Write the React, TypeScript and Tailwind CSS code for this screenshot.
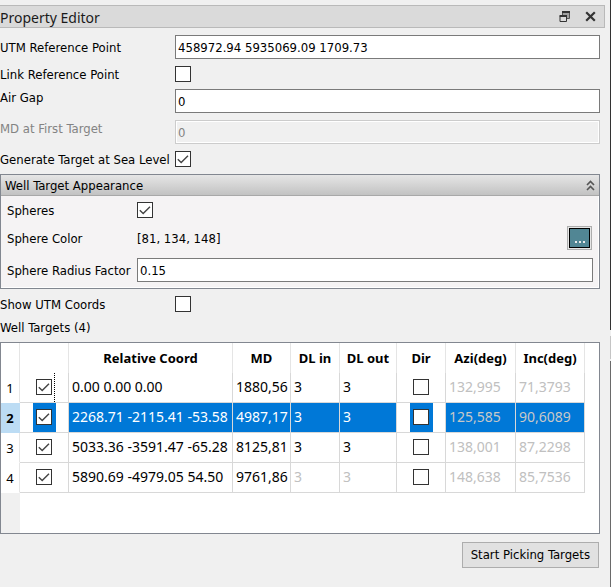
import { useState } from "react";
import type { ReactNode } from "react";

const INPUT =
  "block h-6 w-full min-w-0 border border-[#7a7a7a] bg-white px-[2px] text-[13px] text-black outline-none disabled:border-[#cccccc] disabled:bg-[#f0f0f0] disabled:text-[#838383] disabled:shadow-[inset_0_0_0_1px_#ffffff]";

const LABEL = "-mb-0.5 whitespace-nowrap leading-[18px]";

function CheckBox({ id, label, initial = false }: { id?: string; label?: string; initial?: boolean }) {
  const [checked, setChecked] = useState(initial);
  return (
    <span className="inline-grid size-4 shrink-0">
      <input
        id={id}
        type="checkbox"
        aria-label={label}
        checked={checked}
        onChange={(e) => setChecked(e.target.checked)}
        className="col-start-1 row-start-1 size-4 appearance-none border border-[#333333] bg-white"
      />
      {checked && (
        <svg viewBox="0 0 16 16" className="pointer-events-none col-start-1 row-start-1 size-4" fill="none" stroke="#444444" strokeWidth="1.4">
          <path d="M2.8 8.2 L6.2 11.6 L13 4.8" />
        </svg>
      )}
    </span>
  );
}

function Field({ id, label, disabled, top, children }: { id: string; label: string; disabled?: boolean; top?: boolean; children: ReactNode }) {
  return (
    <div className={`grid grid-cols-[175px_minmax(0,1fr)] ${top ? "items-start" : "items-center"}`}>
      <label htmlFor={id} className={`${LABEL} ${disabled ? "text-[#838383]" : ""}`}>
        {label}
      </label>
      {children}
    </div>
  );
}

type Target = { coord: string; md: string; dlIn: string; dlOut: string; azi: string; inc: string };

const TARGETS: Target[] = [
  { coord: "0.00 0.00 0.00", md: "1880,56", dlIn: "3", dlOut: "3", azi: "132,995", inc: "71,3793" },
  { coord: "2268.71 -2115.41 -53.58", md: "4987,17", dlIn: "3", dlOut: "3", azi: "125,585", inc: "90,6089" },
  { coord: "5033.36 -3591.47 -65.28", md: "8125,81", dlIn: "3", dlOut: "3", azi: "138,001", inc: "87,2298" },
  { coord: "5890.69 -4979.05 54.50", md: "9761,86", dlIn: "3", dlOut: "3", azi: "148,638", inc: "85,7536" },
];

const HEADERS = ["", "Relative Coord", "MD", "DL in", "DL out", "Dir", "Azi(deg)", "Inc(deg)"];

function TargetRow({ target, index, selected }: { target: Target; index: number; selected: boolean }) {
  const last = index === TARGETS.length - 1;
  const cell = "border-r border-b border-[#d8d8d8] bg-clip-padding px-[3px] pb-0.5 overflow-hidden";
  const fill = selected ? "bg-[#0078d7]" : "";
  const main = selected ? "text-white" : "text-black";
  const dim = selected ? "text-[#c8c8c8]" : "text-[#c0c0c0]";
  const dl = last ? dim : main;
  const n = index + 1;
  return (
    <tr className="h-[30px] text-[14px]">
      <th
        scope="row"
        className={`border-r border-b text-center text-[13px] ${selected ? "border-[#bcdcf4] bg-[#bcdcf4] font-bold" : "border-r-[#e5e5e5] border-b-white font-normal"}`}
      >
        {n}
      </th>
      <td className="border-r border-b border-[#d8d8d8] pl-[13px]">
        <div className={`flex h-[29px] items-start pt-[6px] pl-[3px] ${index === 0 ? "w-[22px] border-r border-dotted border-black" : "w-[23px]"} ${fill}`}>
          <CheckBox label={`Use target ${n}`} initial />
        </div>
      </td>
      <td className={`${cell} ${fill} ${main}`}>{target.coord}</td>
      <td className={`${cell} ${fill} ${main}`}>{target.md}</td>
      <td className={`${cell} ${fill} ${dl}`}>{target.dlIn}</td>
      <td className={`${cell} ${fill} ${dl}`}>{target.dlOut}</td>
      <td className="border-r border-b border-[#d8d8d8] pl-[13px]">
        <div className={`flex h-[29px] w-[23px] items-start pt-[6px] pl-[3px] ${fill}`}>
          <CheckBox label={`Direction of target ${n}`} />
        </div>
      </td>
      <td className={`${cell} ${fill} ${dim}`}>{target.azi}</td>
      <td className={`${cell} ${fill} ${dim}`}>{target.inc}</td>
      <td />
    </tr>
  );
}

function TargetTable() {
  return (
    <div className="overflow-x-auto border border-[#828790] bg-white">
      <table className="w-full table-fixed border-separate border-spacing-0 whitespace-nowrap font-['Noto_Sans',sans-serif]">
        <colgroup>
          <col className="w-[19px]" />
          <col className="w-[49px]" />
          <col className="w-[164px]" />
          <col className="w-[58px]" />
          <col className="w-[49px]" />
          <col className="w-[57px]" />
          <col className="w-[49px]" />
          <col className="w-[70px]" />
          <col className="w-[69px]" />
          <col />
        </colgroup>
        <thead>
          <tr className="h-[30px] text-[13px]">
            <td className="border-r border-[#e5e5e5]" />
            {HEADERS.map((h, i) => (
              <th key={i} scope="col" className="border-r border-[#e5e5e5] text-center font-bold">
                {h}
              </th>
            ))}
            <td />
          </tr>
        </thead>
        <tbody>
          {TARGETS.map((t, i) => (
            <TargetRow key={t.coord} target={t} index={i} selected={i === 1} />
          ))}
          <tr className="h-10">
            <td className="bg-[#f0f0f0]" />
            <td colSpan={9} />
          </tr>
        </tbody>
      </table>
    </div>
  );
}

function AppearanceGroup() {
  const row = "grid grid-cols-[130px_minmax(0,1fr)] items-center";
  return (
    <section className="border border-[#828790] bg-[#f5f3f4] shadow-[inset_-1px_-1px_0_#ffffff]">
      <header className="flex h-[21px] items-center justify-between border-b border-[#a8a8a8] bg-linear-to-b from-[#e6e6e6] to-[#c2c2c2] pr-1 pl-1">
        <h2 className={LABEL}>Well Target Appearance</h2>
        <button type="button" aria-label="Collapse" className="block">
          <svg viewBox="0 0 9 11" className="h-[11px] w-[9px]" fill="none" stroke="#555555" strokeWidth="1.6">
            <path d="M1 5 L4.5 1.5 L8 5 M1 10 L4.5 6.5 L8 10" />
          </svg>
        </button>
      </header>
      <div className="flex flex-col gap-2 p-[6px]">
        <div className={row}>
          <label htmlFor="spheres" className={LABEL}>Spheres</label>
          <CheckBox id="spheres" initial />
        </div>
        <div className={row}>
          <span className={LABEL}>Sphere Color</span>
          <div className="flex items-center justify-between">
            <span className={LABEL}>[81, 134, 148]</span>
            <button type="button" aria-label="Pick sphere color" className="mr-px h-6 w-[25px] border border-[#adadad] bg-[#e6e6e6] p-px">
              <span className="flex h-full items-end justify-center gap-[2px] border border-black bg-[#518694] pb-1">
                <i className="size-[2px] bg-[#eaeaea]" />
                <i className="size-[2px] bg-[#eaeaea]" />
                <i className="size-[2px] bg-[#eaeaea]" />
              </span>
            </button>
          </div>
        </div>
        <div className={row}>
          <label htmlFor="radius" className={LABEL}>Sphere Radius Factor</label>
          <input id="radius" defaultValue="0.15" className={INPUT} />
        </div>
      </div>
    </section>
  );
}

export default function App() {
  return (
    <div className="flex min-h-screen bg-[#f0f0f0] font-['DejaVu_Sans_Condensed','Noto_Sans',sans-serif] text-[13px] leading-4 text-black">
      <main className="min-w-0 flex-1 pt-[5px]">
        <header className="mr-[5px] flex h-[23px] items-center justify-between border border-l-0 border-[#b9b9b9] bg-[#dadada] pr-2">
          <h1 className="-mb-0.5 font-['Noto_Sans',sans-serif] text-[14px] text-[#1a1a1a]">Property Editor</h1>
          <div className="flex gap-[15px]">
            <button type="button" aria-label="Float panel">
              <svg viewBox="0 0 11 11" className="size-[11px]" fill="none" stroke="#333333">
                <path d="M3.5 1 H10.5 V7.5 H3.5 Z" fill="#a0a0a0" stroke="#555555" />
                <path d="M3 1 H11" strokeWidth="2" />
                <path d="M1 5.5 H7.5 V10.5 H1 Z" fill="#dadada" />
                <path d="M0.5 5 H8" strokeWidth="2" />
              </svg>
            </button>
            <button type="button" aria-label="Close panel">
              <svg viewBox="0 0 11 11" className="size-[11px]" fill="none" stroke="#333333" strokeWidth="2.2">
                <path d="M1.2 1.2 L9.8 9.8 M9.8 1.2 L1.2 9.8" />
              </svg>
            </button>
          </div>
        </header>
        <form className="mr-[10px] flex flex-col gap-[7px] pt-[7px]" onSubmit={(e) => e.preventDefault()}>
          <Field id="utm" label="UTM Reference Point">
            <input id="utm" defaultValue="458972.94 5935069.09 1709.73" className={INPUT} />
          </Field>
          <Field id="link" label="Link Reference Point">
            <CheckBox id="link" />
          </Field>
          <Field id="gap" label="Air Gap" top>
            <input id="gap" defaultValue="0" className={INPUT} />
          </Field>
          <Field id="md" label="MD at First Target" disabled top>
            <input id="md" defaultValue="0" disabled className={INPUT} />
          </Field>
          <Field id="sea" label="Generate Target at Sea Level">
            <CheckBox id="sea" initial />
          </Field>
          <AppearanceGroup />
          <Field id="coords" label="Show UTM Coords">
            <CheckBox id="coords" />
          </Field>
          <p className={LABEL}>Well Targets (4)</p>
          <TargetTable />
          <button type="button" className="mt-px mr-px h-[26px] self-end border border-[#adadad] bg-[#e1e1e1] px-2 whitespace-nowrap">
            Start Picking Targets
          </button>
        </form>
      </main>
      <div className="flex w-px flex-col">
        <div className="h-[330px] bg-[#333333]" />
        <div className="mt-[6px] h-[23px] bg-[#c4c4c4]" />
        <div className="mt-[2px] flex-1 bg-[#6a6a6a]" />
      </div>
    </div>
  );
}
